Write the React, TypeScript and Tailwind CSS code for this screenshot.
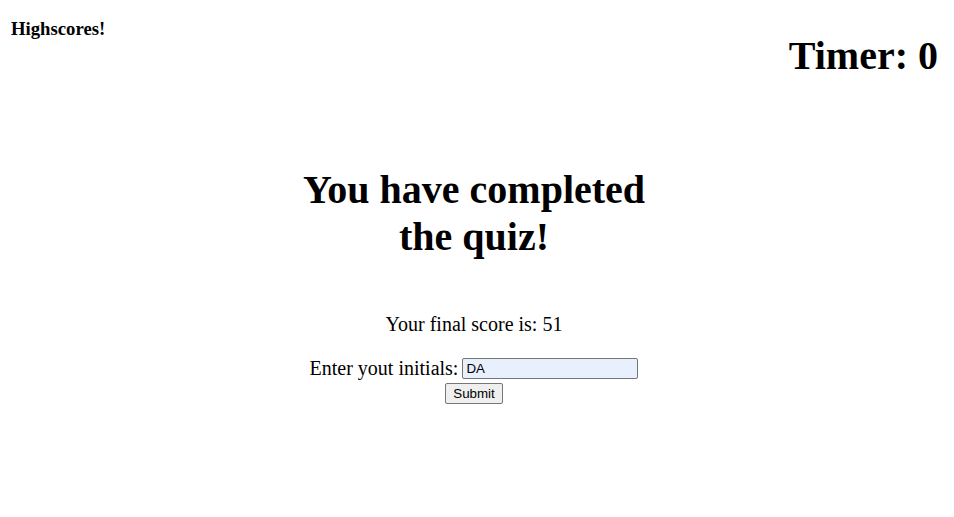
import { FunctionComponent } from "react";

const App: FunctionComponent = () => {
  return (
    <div className="min-h-[517px] bg-white text-black font-['Liberation_Serif','Times_New_Roman',serif]">
      <div className="flex justify-between items-start">
        <h3 className="ml-[11px] mt-[18px] text-[18.72px] leading-[22px] font-bold">Highscores!</h3>
        <h1 className="mr-[16px] mt-[34px] text-[40px] leading-[44px] font-bold">Timer: 0</h1>
      </div>

      <div className="flex flex-col items-center pr-[6px]">
        <h1 className="mt-[88px] w-[380px] text-center text-[40px] leading-[47px] font-bold">
          You have completed the quiz!
        </h1>
        <p className="mt-[53px] text-[20px] leading-[23px]">Your final score is: 51</p>
        <div className="mt-[21px] flex items-center text-[20px] leading-[23px]">
          <span>Enter yout initials:</span>
          <input
            type="text"
            defaultValue="DA"
            className="ml-[4px] w-[176px] h-[21px] px-[3px] border border-[#767676] rounded-[2px] bg-[#e8f0fe] text-[13.33px] font-['Liberation_Sans',Arial,sans-serif] outline-none"
          />
        </div>
        <button className="mt-[3px] h-[21px] px-[7px] border border-[#767676] rounded-[2px] bg-[#efefef] text-[13.33px] leading-[16px] font-['Liberation_Sans',Arial,sans-serif]">
          Submit
        </button>
      </div>
    </div>
  );
};

export default App;
